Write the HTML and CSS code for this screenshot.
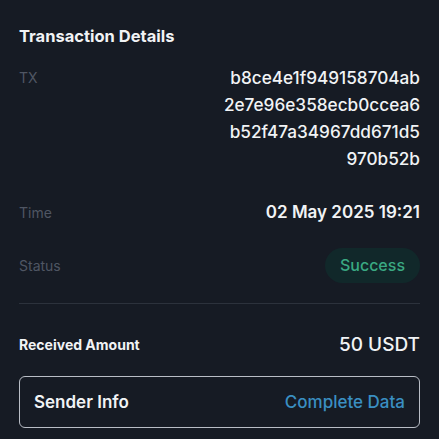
FILE: index.html
```html
<!DOCTYPE html>
<html lang="en">
<head>
  <meta charset="UTF-8">
  <meta name="viewport" content="width=device-width, initial-scale=1.0"/>
  <title>Transaction Details</title>
  <link rel="stylesheet" href="styles.css">
</head>
<body>
  <div id="details-container">
    <h1>Transaction Details</h1>

    <div class="detail-list">
      <div class="detail-row tx-row">
        <span class="label">TX</span>
        <span class="hash">b8ce4e1f949158704ab<br>2e7e96e358ecb0ccea6<br>b52f47a34967dd671d5<br>970b52b</span>
      </div>
      <div class="detail-row">
        <span class="label">Time</span>
        <span class="value">02 May 2025 19:21</span>
      </div>
      <div class="detail-row">
        <span class="label">Status</span>
        <span class="status-pill">Success</span>
      </div>
    </div>

    <hr class="divider">

    <div class="amount-row">
      <span class="amount-label">Received Amount</span>
      <span class="amount-value">50 USDT</span>
    </div>

    <div class="sender-box">
      <span class="sender-title">Sender Info</span>
      <span class="sender-link">Complete Data</span>
    </div>
  </div>
</body>
</html>
```

FILE: styles.css
```css
body {
  font-family: Inter, "Noto Sans", sans-serif;
  background-color: #161b24;
  color: #f1f3f5;
  margin: 0;
}

#details-container {
  padding: 24px 19px;
}

h1 {
  font-size: 16.5px;
  line-height: 24px;
  font-weight: 700;
  margin: 0 0 16px;
}

.detail-list {
  display: flex;
  flex-direction: column;
  gap: 22px;
}

.detail-row {
  display: flex;
  justify-content: space-between;
  align-items: center;
}

.tx-row {
  align-items: flex-start;
  padding-bottom: 5px;
}

.label {
  font-size: 14px;
  line-height: 27px;
  color: #4f5663;
}

.hash {
  font-size: 17.2px;
  line-height: 27px;
  font-weight: 500;
  text-align: right;
}

.value {
  font-size: 17px;
  line-height: 27px;
  font-weight: 600;
}

.status-pill {
  background-color: #11282a;
  color: #3aa982;
  font-size: 16px;
  font-weight: 500;
  line-height: 35px;
  padding: 0 15px;
  border-radius: 18px;
}

.divider {
  border: none;
  border-top: 1px solid #2c323c;
  margin: 20px 0 0;
}

.amount-row {
  display: flex;
  justify-content: space-between;
  align-items: center;
  height: 28px;
  margin: 26px 0 18px;
}

.amount-label {
  font-size: 14px;
  font-weight: 700;
}

.amount-value {
  font-size: 19px;
  font-weight: 500;
}

.sender-box {
  display: flex;
  justify-content: space-between;
  align-items: center;
  height: 50px;
  padding: 0 14px;
  border: 1.5px solid #b9bec6;
  border-radius: 6px;
}

.sender-title {
  font-size: 17px;
  font-weight: 600;
}

.sender-link {
  font-size: 17px;
  font-weight: 500;
  color: #3a8fc2;
}
```
